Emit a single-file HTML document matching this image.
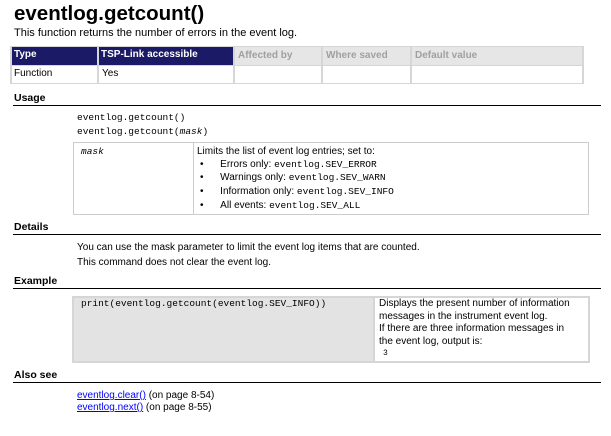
<!DOCTYPE html>
<html><head><style>
body{margin:0;width:611px;height:436px;background:#fff;position:relative;font-family:"Liberation Sans",sans-serif;color:#000;overflow:hidden}
.a{position:absolute;white-space:nowrap}
.m{font-family:"Liberation Mono",monospace;font-size:9.5px}
.s{font-size:10.5px}
.h{font-weight:bold;font-size:10.5px}
.ln{position:absolute;left:13px;width:588px;height:1px;background:#000}
</style></head><body>
<div class="a" style="left:14px;top:2px;font-size:20.5px;font-weight:bold">eventlog.getcount()</div>
<div class="a s" style="left:14px;top:27px;font-size:11px">This function returns the number of errors in the event log.</div>

<div style="position:absolute;left:10px;top:46px;width:574px;height:38px;background:#d6d6d6"></div>
<div style="position:absolute;left:12px;top:47px;width:85px;height:18px;background:#1a1a66"></div>
<div style="position:absolute;left:99px;top:47px;width:134px;height:18px;background:#1a1a66"></div>
<div style="position:absolute;left:235px;top:47px;width:86px;height:18px;background:#e6e6e6"></div>
<div style="position:absolute;left:323px;top:47px;width:87px;height:18px;background:#e6e6e6"></div>
<div style="position:absolute;left:412px;top:47px;width:170px;height:18px;background:#e6e6e6"></div>
<div style="position:absolute;left:12px;top:66px;width:85px;height:17px;background:#fff"></div>
<div style="position:absolute;left:99px;top:66px;width:134px;height:17px;background:#fff"></div>
<div style="position:absolute;left:235px;top:66px;width:86px;height:17px;background:#fff"></div>
<div style="position:absolute;left:323px;top:66px;width:87px;height:17px;background:#fff"></div>
<div style="position:absolute;left:412px;top:66px;width:170px;height:17px;background:#fff"></div>
<div class="a h" style="left:14px;top:49px;color:#fff;font-size:10px">Type</div>
<div class="a h" style="left:101px;top:49px;color:#fff;font-size:10px">TSP-Link accessible</div>
<div class="a h" style="left:238px;top:50px;color:#a0a0a0;font-size:10px">Affected by</div>
<div class="a h" style="left:326px;top:50px;color:#a0a0a0;font-size:10px">Where saved</div>
<div class="a h" style="left:415px;top:50px;color:#a0a0a0;font-size:10px">Default value</div>
<div class="a" style="left:14px;top:68px;font-size:10px">Function</div>
<div class="a" style="left:102px;top:68px;font-size:10px">Yes</div>

<div class="a h" style="left:14px;top:92px">Usage</div>
<div class="ln" style="top:105px"></div>
<div class="a m" style="left:77px;top:112px">eventlog.getcount()</div>
<div class="a m" style="left:77px;top:126px">eventlog.getcount(<i>mask</i>)</div>

<div style="position:absolute;left:73px;top:142px;width:514px;height:71px;border:1px solid #ccc"></div>
<div style="position:absolute;left:193px;top:143px;width:1px;height:71px;background:#ccc"></div>
<div class="a m" style="left:81px;top:146px"><i>mask</i></div>
<div class="a s" style="left:197px;top:146px;font-size:10px">Limits the list of event log entries; set to:</div>
<div class="a s" style="left:200px;top:159px;font-size:10px">•&nbsp;&nbsp;&nbsp;&nbsp;&nbsp;&nbsp;Errors only: <span class="m">eventlog.SEV_ERROR</span></div>
<div class="a s" style="left:200px;top:172px;font-size:10px">•&nbsp;&nbsp;&nbsp;&nbsp;&nbsp;&nbsp;Warnings only: <span class="m">eventlog.SEV_WARN</span></div>
<div class="a s" style="left:200px;top:186px;font-size:10px">•&nbsp;&nbsp;&nbsp;&nbsp;&nbsp;&nbsp;Information only: <span class="m">eventlog.SEV_INFO</span></div>
<div class="a s" style="left:200px;top:200px;font-size:10px">•&nbsp;&nbsp;&nbsp;&nbsp;&nbsp;&nbsp;All events: <span class="m">eventlog.SEV_ALL</span></div>

<div class="a h" style="left:14px;top:221px">Details</div>
<div class="ln" style="top:234px"></div>
<div class="a s" style="left:77px;top:242px;font-size:10px">You can use the mask parameter to limit the event log items that are counted.</div>
<div class="a s" style="left:77px;top:257px;font-size:10px">This command does not clear the event log.</div>

<div class="a h" style="left:14px;top:275px">Example</div>
<div class="ln" style="top:288px"></div>
<div style="position:absolute;left:72px;top:296px;width:518px;height:67px;background:#d6d6d6"></div>
<div style="position:absolute;left:74px;top:298px;width:299px;height:63px;background:#e3e3e3"></div>
<div style="position:absolute;left:375px;top:298px;width:213px;height:63px;background:#fff"></div>
<div class="a m" style="left:81px;top:298px">print(eventlog.getcount(eventlog.SEV_INFO))</div>
<div class="a" style="left:379px;top:298px;font-size:10px;line-height:12.7px">Displays the present number of information<br>messages in the instrument event log.<br>If there are three information messages in<br>the event log, output is:</div>
<div class="a m" style="left:383px;top:349px;font-size:8px">3</div>

<div class="a h" style="left:14px;top:369px">Also see</div>
<div class="ln" style="top:382px"></div>
<div class="a" style="left:77px;top:390px;font-size:10px"><span style="color:#00f;text-decoration:underline">eventlog.clear()</span> (on page 8-54)</div>
<div class="a" style="left:77px;top:402px;font-size:10px"><span style="color:#00f;text-decoration:underline">eventlog.next()</span> (on page 8-55)</div>
</body></html>
